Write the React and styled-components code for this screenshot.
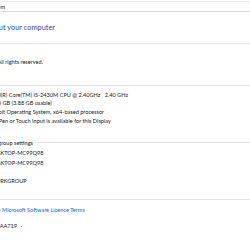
import React from "react";
import styled, { createGlobalStyle } from "styled-components";

const Global = createGlobalStyle`
  html, body { margin: 0; padding: 0; background: #ffffff; overflow: hidden; }
  body { font-family: Lato, "Noto Sans", sans-serif; color: #1a1a1a; }
`;

const Page = styled.div`
  width: 250px;
  height: 250px;
  overflow: hidden;
  display: flex;
  flex-direction: column;
`;

const AddressBar = styled.div`
  margin-top: 1px;
  height: 9px;
  border-top: 1px solid #ececec;
  border-bottom: 1px solid #dedede;
  display: flex;
  align-items: center;
  font-size: 5.6px;
  color: #222;
`;

/* zero-width box whose text ends at x = $at and overflows to the left */
const EndAnchor = styled.div`
  width: 0;
  margin-left: ${(p) => p.$at}px;
  flex-shrink: 0;
  display: flex;
  justify-content: flex-end;
  white-space: pre;
`;

const Title = styled.div`
  margin-top: 11px;
  height: 10px;
  line-height: 10px;
  display: flex;
  font-size: 7.4px;
  color: #1f4f9e;
`;

const SectionHeader = styled.div`
  margin-top: ${(p) => p.$mt}px;
  height: 7px;
  display: flex;
  align-items: center;
  font-size: 5.6px;
  color: #1a1a1a;
`;

const Rule = styled.div`
  flex: 1;
  height: 1px;
  margin-left: ${(p) => p.$gap}px;
  background: #e2e2e2;
`;

const TextLine = styled.div`
  margin-top: ${(p) => p.$mt || 0}px;
  height: ${(p) => p.$h}px;
  line-height: ${(p) => p.$h}px;
  display: flex;
  font-size: 5.6px;
`;

const Rows = styled.div`
  margin-top: ${(p) => p.$mt}px;
  display: flex;
  flex-direction: column;
`;

const Row = styled.div`
  margin-left: -85px;
  height: ${(p) => p.$h}px;
  line-height: ${(p) => p.$h}px;
  display: grid;
  grid-template-columns: 75px auto;
  font-size: 5.6px;
  white-space: pre;
`;

const Label = styled.span`
  color: #1a1a1a;
`;

const Value = styled.span`
  color: #1a1a1a;
`;

const Link = styled.span`
  color: #1a66c9;
  white-space: pre;
`;

const Dot = styled.span`
  width: 1px;
  height: 1px;
  margin: 5px 0 0 4px;
  background: #9a9a9a;
`;

const systemRows = [
  ["Processor:", "Intel(R) Core(TM) i5-2430M CPU @ 2.40GHz   2.40 GHz"],
  ["Installed memory (RAM):", "4.00 GB (3.88 GB usable)"],
  ["System type:", "64-bit Operating System, x64-based processor"],
  ["Pen and Touch:", "No Pen or Touch Input is available for this Display"],
];

const nameRows = [
  ["Computer name:", "DESKTOP-MC99Q98"],
  ["Full computer name:", "DESKTOP-MC99Q98"],
  ["Computer description:", ""],
  ["Workgroup:", "WORKGROUP"],
];

export default function App() {
  return (
    <Page>
      <Global />
      <AddressBar>
        <EndAnchor $at={5}>Control Panel › System and Security › System</EndAnchor>
      </AddressBar>
      <Title>
        <EndAnchor $at={55}>View basic information about your computer</EndAnchor>
      </Title>
      <SectionHeader $mt={7}>
        <EndAnchor $at={-40}>Windows edition</EndAnchor>
        <Rule $gap={40} />
      </SectionHeader>
      <TextLine $h={9} $mt={1}>
        <EndAnchor $at={-40}>Windows 10 Home</EndAnchor>
      </TextLine>
      <TextLine $h={9}>
        <EndAnchor $at={43}>© 2018 Microsoft Corporation. All rights reserved.</EndAnchor>
      </TextLine>
      <SectionHeader $mt={16}>
        <EndAnchor $at={-80}>System</EndAnchor>
        <Rule $gap={80} />
      </SectionHeader>
      <Rows $mt={1.6}>
        {systemRows.map(([l, v]) => (
          <Row key={l} $h={8.7}>
            <Label>{l}</Label>
            <Value>{v}</Value>
          </Row>
        ))}
      </Rows>
      <SectionHeader $mt={13.5}>
        <EndAnchor $at={33}>Computer name, domain and workgroup settings</EndAnchor>
        <Rule $gap={3} />
      </SectionHeader>
      <Rows $mt={2.3}>
        {nameRows.map(([l, v]) => (
          <Row key={l} $h={9.4}>
            <Label>{l}</Label>
            <Value>{v}</Value>
          </Row>
        ))}
      </Rows>
      <SectionHeader $mt={10}>
        <EndAnchor $at={-50}>Windows activation</EndAnchor>
        <Rule $gap={50} />
      </SectionHeader>
      <TextLine $h={9} $mt={2.5}>
        <EndAnchor $at={2}>Windows is activated   Read the </EndAnchor>
        <Link>Microsoft Software Licence Terms</Link>
      </TextLine>
      <TextLine $h={9} $mt={6.5}>
        <EndAnchor $at={17}>Product ID: 00330-80000-00000-AA719</EndAnchor>
        <Dot />
      </TextLine>
    </Page>
  );
}
